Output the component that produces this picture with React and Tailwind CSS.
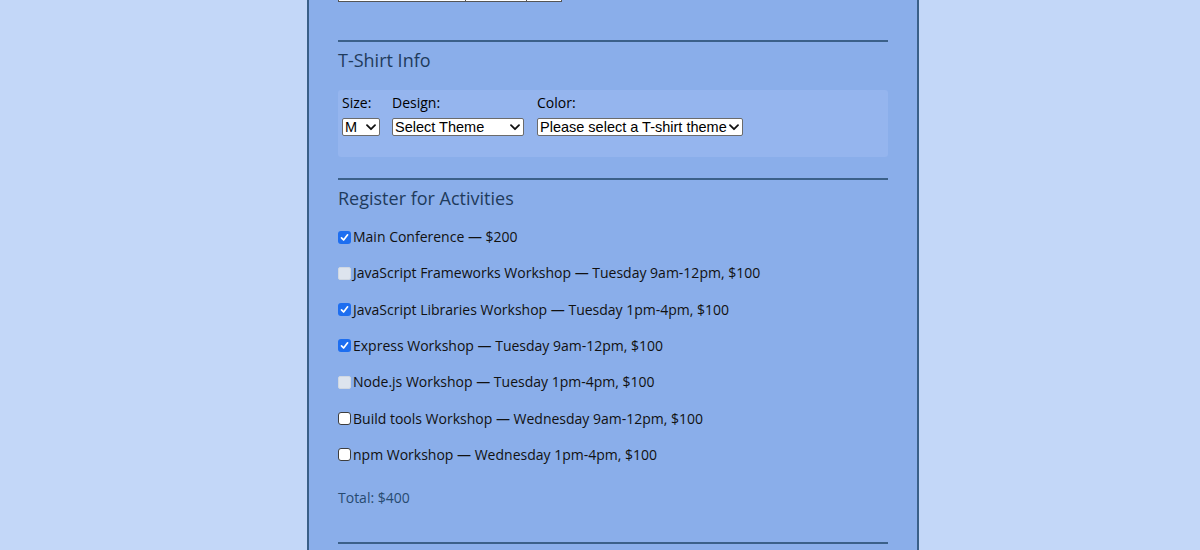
import React from "react";

const font = { fontFamily: '"Open Sans", "Noto Sans", sans-serif' };

function Chevron() {
  return (
    <svg width="10" height="7" viewBox="0 0 10 7" className="shrink-0">
      <path d="M1 1.2 L5 5.2 L9 1.2" fill="none" stroke="#111" strokeWidth="1.8" strokeLinecap="round" strokeLinejoin="round" />
    </svg>
  );
}

function FakeSelect({ value, width }) {
  return (
    <div
      className="flex h-[18px] items-center justify-between gap-[2px] rounded-[2px] border border-[#6b6b6b] bg-white pl-[2px] pr-[3px] text-[14.5px] leading-[16px] text-black"
      style={{ width, fontFamily: '"Liberation Sans", Arial, sans-serif' }}
    >
      <span className="whitespace-nowrap">{value}</span>
      <Chevron />
    </div>
  );
}

function Box({ state }) {
  if (state === "checked") {
    return (
      <span className="flex h-[13px] w-[13px] shrink-0 items-center justify-center rounded-[3px] bg-[#1d6ef0]">
        <svg width="9" height="9" viewBox="0 0 9 9">
          <path d="M1.5 4.8 L3.6 7 L7.6 1.8" fill="none" stroke="#fff" strokeWidth="1.7" strokeLinecap="round" strokeLinejoin="round" />
        </svg>
      </span>
    );
  }
  if (state === "disabled") {
    return <span className="h-[13px] w-[13px] shrink-0 rounded-[2px] border border-[#cfd7e2] bg-[#dde4ee]" />;
  }
  return <span className="h-[13px] w-[13px] shrink-0 rounded-[3px] border border-[#3d3d3d] bg-white" />;
}

const activities = [
  ["checked", "Main Conference — $200"],
  ["disabled", "JavaScript Frameworks Workshop — Tuesday 9am-12pm, $100"],
  ["checked", "JavaScript Libraries Workshop — Tuesday 1pm-4pm, $100"],
  ["checked", "Express Workshop — Tuesday 9am-12pm, $100"],
  ["disabled", "Node.js Workshop — Tuesday 1pm-4pm, $100"],
  ["unchecked", "Build tools Workshop — Wednesday 9am-12pm, $100"],
  ["unchecked", "npm Workshop — Wednesday 1pm-4pm, $100"],
];

export default function App() {
  return (
    <div className="h-[550px] overflow-hidden bg-[#c3d7f8]" style={font}>
      <div className="ml-[307px] h-full w-[612px] border-x-2 border-[#3a5f88] bg-[#8aaeea] px-[29px]">
        {/* bottoms of the previous row of inputs */}
        <div className="flex h-[2px] w-[224px]">
          <div className="h-full w-[128px] border-x border-b border-[#555] bg-white" />
          <div className="h-full w-[61px] border-r border-b border-[#555] bg-white" />
          <div className="h-full w-[35px] border-r border-b border-[#555] bg-white" />
        </div>

        <div className="mt-[38px] h-[2px] bg-[#3b6089]" />
        <h2 className="mt-[6px] h-[24px] text-[18px] leading-[24px] text-[#1f3b5c]">T-Shirt Info</h2>

        <div className="mt-[18px] flex h-[67px] gap-[12px] rounded-[3px] bg-[#95b5ee] px-[4px] pt-[4px]">
          <div className="flex flex-col gap-[6px]">
            <span className="text-[14px] leading-[18px] text-black">Size:</span>
            <FakeSelect value="M" width={38} />
          </div>
          <div className="flex flex-col gap-[6px]">
            <span className="text-[14px] leading-[18px] text-black">Design:</span>
            <FakeSelect value="Select Theme" width={132} />
          </div>
          <div className="ml-[1px] flex flex-col gap-[6px]">
            <span className="text-[14px] leading-[18px] text-black">Color:</span>
            <FakeSelect value="Please select a T-shirt theme" width={206} />
          </div>
        </div>

        <div className="mt-[21px] h-[2px] bg-[#3b6089]" />
        <h2 className="mt-[6px] h-[24px] text-[18px] leading-[24px] text-[#1f3b5c]">Register for Activities</h2>

        <div className="mt-[17px] flex flex-col gap-[16.33px]">
          {activities.map(([state, label]) => (
            <label key={label} className="flex h-[20px] items-center gap-[2px] text-[14px] leading-[20px] text-[#111]">
              <Box state={state} />
              <span className="whitespace-nowrap">{label}</span>
            </label>
          ))}
        </div>

        <p className="mt-[23px] h-[20px] text-[14px] leading-[20px] text-[#274a70]">Total: $400</p>

        <div className="mt-[34px] h-[2px] bg-[#3b6089]" />
      </div>
    </div>
  );
}
